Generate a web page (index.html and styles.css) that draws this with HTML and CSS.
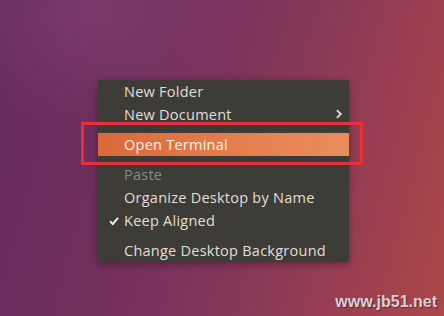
FILE: index.html
```html
<!DOCTYPE html>
<html lang="en">
<head>
    <meta charset="UTF-8">
    <meta name="viewport" content="width=device-width, initial-scale=1.0">
    <title>Desktop Menu</title>
    <link rel="stylesheet" href="styles.css">
</head>
<body>
    <div class="desktop">
        <div class="context-menu">
            <div class="item">New Folder</div>
            <div class="item has-sub">New Document
                <svg class="chevron" width="8" height="10" viewBox="0 0 8 10"><path d="M1.8 1.2 L5.8 5 L1.8 8.8" fill="none" stroke="#e6e2da" stroke-width="1.8"/></svg>
            </div>
            <div class="sep"></div>
            <div class="item active">Open Terminal</div>
            <div class="sep"></div>
            <div class="item disabled">Paste</div>
            <div class="item">Organize Desktop by Name</div>
            <div class="item">
                <svg class="check" width="10" height="10" viewBox="0 0 10 10"><path d="M1 5.2 L3.8 8 L9 1.8" fill="none" stroke="#ece8e0" stroke-width="2"/></svg>
                Keep Aligned
            </div>
            <div class="sep"></div>
            <div class="item">Change Desktop Background</div>
        </div>
        <!-- red box drawn over the screenshot -->
        <div class="mark"></div>
        <div class="watermark">www.jb51.net</div>
    </div>
</body>
</html>
```
FILE: styles.css
```css
body {
    margin: 0;
    font-family: "Open Sans", "DejaVu Sans", sans-serif;
}
.desktop {
    position: relative;
    width: 444px;
    height: 316px;
    overflow: hidden;
    background:
        radial-gradient(ellipse 160px 120px at 90px 10px, rgba(150, 80, 130, 0.35), transparent),
        linear-gradient(105deg, #652b5e 0%, #73305c 35%, #85375a 58%, #9c4050 82%, #ab4848 100%);
}
.context-menu {
    position: absolute;
    left: 98px;
    top: 80px;
    width: 251px;
    background-color: #3d3c37;
    box-shadow: 0 2px 8px rgba(0, 0, 0, 0.35);
}
.item {
    position: relative;
    height: 23px;
    line-height: 23px;
    padding-left: 26px;
    font-size: 14.5px;
    letter-spacing: 0.25px;
    color: #e3dfd6;
    white-space: nowrap;
}
.item.disabled {
    color: #8b8882;
}
.item.active {
    background: linear-gradient(to right, #db6939, #e5804f 60%, #e98c5c);
    color: #fff4ec;
}
.chevron {
    position: absolute;
    right: 6px;
    top: 6px;
}
.check {
    position: absolute;
    left: 11px;
    top: 7px;
}
.sep {
    height: 7px;
    position: relative;
}
.sep::after {
    content: "";
    position: absolute;
    left: 0;
    right: 0;
    top: 3px;
    height: 1px;
    background-color: #393833;
}
.mark {
    position: absolute;
    left: 81px;
    top: 122px;
    width: 276px;
    height: 37px;
    border: 3px solid #e8303c;
}
.watermark {
    position: absolute;
    right: 7px;
    bottom: 5px;
    font-family: "Liberation Sans", Arial, sans-serif;
    font-weight: bold;
    font-size: 16px;
    color: #d8cfd6;
    text-shadow: 1px 1px 1px rgba(60, 20, 40, 0.6);
}
```
